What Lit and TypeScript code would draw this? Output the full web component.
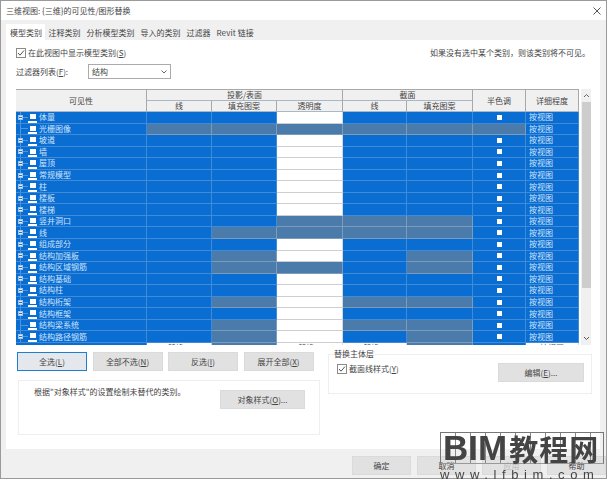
import { LitElement, html, css } from "lit";
import { customElement } from "lit/decorators.js";

const ROWS: [string, string, boolean][] = [
  ["体量", "bbwbbb", true],
  ["光栅图像", "gggggg", false],
  ["坡道", "bbwbbb", true],
  ["墙", "bbwbbb", true],
  ["屋顶", "bbwbbb", true],
  ["常规模型", "bbwbbb", true],
  ["柱", "bbwbbb", true],
  ["楼板", "bbwbbb", true],
  ["楼梯", "bbwbbb", true],
  ["竖井洞口", "bbgggb", true],
  ["线", "bggggb", true],
  ["组成部分", "bbwbbb", true],
  ["结构加强板", "bgwbgb", true],
  ["结构区域钢筋", "bggbgb", true],
  ["结构基础", "bbwbbb", true],
  ["结构柱", "bbwbbb", true],
  ["结构桁架", "bgwggb", true],
  ["结构框架", "bbwbbb", true],
  ["结构梁系统", "bgwggb", false],
  ["结构路径钢筋", "bgwbgb", true],
];

const TABS = ["模型类别", "注释类别", "分析模型类别", "导入的类别", "过滤器", "Revit 链接"];

@customElement("app-root")
export class AppRoot extends LitElement {
  static styles = css`
    :host {
      display: block;
      width: 608px;
      height: 480px;
      overflow: hidden;
      background: #fff;
      font-family: "Noto Sans CJK SC", "Liberation Sans", sans-serif;
      font-size: 8px;
      color: #333;
    }
    * { box-sizing: border-box; }
    .win {
      position: relative;
      width: 607px;
      height: 479px;
      border: 1px solid #9a9a9a;
      background: #f0f0f0;
      display: flex;
      flex-direction: column;
      filter: blur(0.5px);
    }
    .title {
      height: 19px;
      background: #fff;
      display: flex;
      align-items: center;
      justify-content: space-between;
      padding: 0 5px 0 5px;
      font-size: 8px;
      color: #444;
    }
    .tabs {
      height: 20px;
      display: flex;
      align-items: flex-end;
      padding-left: 5px;
      font-size: 8px;
      color: #444;
    }
    .tab { height: 16px; display: flex; align-items: center; padding: 0 3px; }
    .tab.on { background: #fff; padding: 0 3px 0 4px; margin-right: 0.5px; }
    .tab.rv { letter-spacing: 0.1px; }
    .panel {
      flex: none;
      height: 409px;
      width: 594px;
      margin-left: 5px;
      background: #fff;
      padding: 6px 10px 0 10px;
    }
    .top { display: flex; justify-content: space-between; align-items: center; height: 13px; }
    .chk { display: inline-flex; align-items: center; gap: 2px; color: #444; }
    .box {
      width: 10px; height: 10px; border: 1px solid #8a8a8a; background: #fff;
      display: inline-flex; align-items: center; justify-content: center;
    }
    .note { color: #444; white-space: nowrap; }
    .filter { display: flex; align-items: center; height: 15px; margin-top: 5px; color: #444; }
    .filter .lab { width: 72px; }
    .select {
      width: 83px; height: 15px; border: 1px solid #ababab; background: #fff;
      display: flex; align-items: center; justify-content: space-between; padding: 0 3px;
    }
    .tablewrap { display: flex; gap: 2px; margin-top: 10px; width: 575px; height: 256px; }
    .grid {
      width: 563px;
      height: 256px;
      overflow: hidden;
      display: grid;
      grid-template-columns: 131px 65px 65px 66px 64px 66px 53px 53px;
      grid-template-rows: 11px 11px;
      grid-auto-rows: 11.55px;
      border-top: 1px solid #a9a9a9;
      background: #f0f0f0;
    }
    .h {
      background: #f0f0f0;
      display: flex; align-items: center; justify-content: center;
      color: #444;
      border-right: 1px solid #a8a8a8;
      border-bottom: 1px solid #a8b8c8;
      line-height: 1;
    }
    .h.a { grid-row: span 2; }
    .h.sp2 { grid-column: span 2; }
    .h.sp3 { grid-column: span 3; }
    .c {
      border-right: 1px solid #3f8bd8;
      border-bottom: 1px solid #3f8bd8;
      overflow: hidden;
      display: flex;
      align-items: center;
      line-height: 1;
      color: #cfe4fa;
    }
    .b { background: #0a6dd2; }
    .g { background: #4a7baa; border-right-color: #7c9cbc; border-bottom-color: #7c9cbc; }
    .w { background: #fff; border-right-color: #d8d8d8; border-bottom-color: #cfcfcf; color: #555; justify-content: center; }
    .name { padding-left: 2px; gap: 0; }
    .twig {
      width: 10px; height: 100%;
      display: flex; align-items: center;
      background:
        linear-gradient(#4e95dc, #4e95dc) 2px 0 / 1px 100% no-repeat,
        linear-gradient(#4e95dc, #4e95dc) 2px 50% / 8px 1px no-repeat;
      flex: none;
    }
    .exp {
      width: 5px; height: 5px; background: #dfeafa; border: 1px solid #9cc3ea;
      display: flex; align-items: center; justify-content: center;
    }
    .exp::after { content: ""; width: 3px; height: 1px; background: #2a70b8; }
    .mark { width: 9px; height: 100%; display: flex; flex-direction: column; align-items: center; flex: none; padding-top: 2px; }
    .mark i { display: block; width: 6px; height: 5px; background: #fff; }
    .mark b { display: block; width: 9px; height: 2px; background: #fff; margin-top: auto; }
    .lbl { margin-left: 2px; white-space: nowrap; }
    .half { justify-content: center; }
    .half i { display: block; width: 5px; height: 5px; background: #fff; }
    .det { padding-left: 3px; }
    .top3 { align-items: flex-start; padding-top: 1px; }
    .bar {
      width: 10px; height: 256px; background: #f0f0f0;
      display: grid; grid-template-rows: 13px 186px 1fr 13px; justify-items: center; align-items: center;
    }
    .thumb { width: 9px; height: 100%; background: #cdcdcd; }
    .lower {
      display: grid;
      grid-template-columns: 304px 264px;
      column-gap: 8px;
      margin-top: 7px;
    }
    .btns { display: flex; gap: 5.5px; margin-left: 1px; }
    .btn {
      height: 19px; background: #e1e1e1; border: 1px solid #dadada;
      display: flex; align-items: center; justify-content: center; color: #444;
    }
    .btns .btn { width: 70px; }
    .btn.on { border: 1px solid #1c7fd0; background: #e4e8ec; }
    .grp1 {
      margin: 9px 0 0 2px;
      width: 302px; height: 55px;
      border: 1px solid #eee;
      display: flex; justify-content: space-between;
      padding: 5px 14px 0 15px;
      color: #444;
    }
    .grp1 .btn { width: 85px; margin-top: 4px; }
    .grp2 {
      margin-top: 2px;
      height: 40px;
      border: 1px solid #eee;
      display: flex; justify-content: space-between; align-items: flex-start;
      padding: 8px 7px 0 8px;
      position: relative;
      color: #444;
    }
    .legend { position: absolute; left: 4px; top: -6px; background: #fff; padding: 0 1px; line-height: 10px; }
    .grp2 .btn { width: 86px; }
    .foot {
      flex: 1;
      display: flex;
      gap: 6px;
      padding: 7px 0 0 351px;
    }
    .foot .btn { width: 59px; height: 19px; }
    .foot .dis { color: #b5b5b5; }
    .u { text-decoration: underline; text-underline-offset: 1px; }
    .wm {
      position: absolute;
      left: 439px;
      top: 431px;
      width: 164px;
      height: 48px;
      color: #444;
      pointer-events: none;
    }
    .wmgrid {
      height: 32px;
      border: 1px solid #777;
      border-bottom-color: #999;
      background: repeating-linear-gradient(90deg, transparent 0 14px, #888 14px 15px);
      display: flex;
      align-items: center;
      white-space: nowrap;
      overflow: visible;
      padding-left: 2px;
    }
    .wm1 { font: bold 35px/32px "Liberation Sans", sans-serif; }
    .wm2 { font: 700 29px/32px "Noto Sans CJK SC", sans-serif; letter-spacing: 1px; margin-left: 2px; }
    .wmurl {
      font: 13px/14px "Liberation Sans", sans-serif;
      letter-spacing: 5.6px;
      white-space: nowrap;
      margin-top: 4px;
    }
  `;

  private cell(k: string) {
    return html`<div class="c ${k}"></div>`;
  }

  private check(size = 8) {
    return html`<svg width="${size}" height="${size}" viewBox="0 0 8 8"><path d="M1 4l2 2.2L7 1.5" fill="none" stroke="#555" stroke-width="1"/></svg>`;
  }

  render() {
    return html`
      <div class="win">
        <div class="title">
          <span>三维视图: {三维}的可见性/图形替换</span>
          <svg width="8" height="8" viewBox="0 0 8 8"><path d="M.5.5l7 7M7.5.5l-7 7" stroke="#555" stroke-width="1" fill="none"/></svg>
        </div>
        <div class="tabs">
          ${TABS.map((t, i) => html`<div class="tab ${i === 0 ? "on" : ""} ${i === 5 ? "rv" : ""}">${t}</div>`)}
        </div>
        <div class="panel">
          <div class="top">
            <span class="chk"><span class="box">${this.check()}</span><span>在此视图中显示模型类别(<span class="u">S</span>)</span></span>
            <span class="note">如果没有选中某个类别，则该类别将不可见。</span>
          </div>
          <div class="filter">
            <span class="lab">过滤器列表(<span class="u">F</span>):</span>
            <div class="select">
              <span>结构</span>
              <svg width="6" height="4" viewBox="0 0 6 4"><path d="M.5.5L3 3 5.5.5" fill="none" stroke="#666"/></svg>
            </div>
          </div>
          <div class="tablewrap">
            <div class="grid">
              <div class="h a">可见性</div>
              <div class="h sp3">投影/表面</div>
              <div class="h sp2">截面</div>
              <div class="h a">半色调</div>
              <div class="h a">详细程度</div>
              <div class="h">线</div>
              <div class="h">填充图案</div>
              <div class="h">透明度</div>
              <div class="h">线</div>
              <div class="h">填充图案</div>
              ${ROWS.map(([name, k, exp]) => html`
                <div class="c b name">
                  <span class="twig">${exp ? html`<span class="exp"></span>` : ""}</span>
                  <span class="mark"><i></i><b></b></span>
                  <span class="lbl">${name}</span>
                </div>
                ${[0, 1, 2, 3, 4].map((i) => this.cell(k[i]))}
                <div class="c half ${k[5]}">${k[5] === "b" ? html`<i></i>` : ""}</div>
                <div class="c b det">按视图</div>
              `)}
              <div class="c b"></div>
              <div class="c w top3">替换...</div>
              <div class="c g"></div>
              <div class="c w top3">替换...</div>
              <div class="c w top3">替换...</div>
              <div class="c g"></div>
              <div class="c b"></div>
              <div class="c w top3">按视图</div>
            </div>
            <div class="bar">
              <svg width="7" height="5" viewBox="0 0 7 5"><path d="M1 4l2.5-2.5L6 4" fill="none" stroke="#666"/></svg>
              <div class="thumb"></div>
              <div></div>
              <svg width="7" height="5" viewBox="0 0 7 5"><path d="M1 1l2.5 2.5L6 1" fill="none" stroke="#555"/></svg>
            </div>
          </div>
          <div class="lower">
            <div>
              <div class="btns">
                <div class="btn on">全选(<span class="u">L</span>)</div>
                <div class="btn">全部不选(<span class="u">N</span>)</div>
                <div class="btn">反选(<span class="u">I</span>)</div>
                <div class="btn">展开全部(<span class="u">X</span>)</div>
              </div>
              <div class="grp1">
                <span>根据"对象样式"的设置绘制未替代的类别。</span>
                <div class="btn">对象样式(<span class="u">O</span>)...</div>
              </div>
            </div>
            <div class="grp2">
              <span class="legend">替换主体层</span>
              <span class="chk"><span class="box">${this.check()}</span><span>截面线样式(<span class="u">Y</span>)</span></span>
              <div class="btn">编辑(<span class="u">E</span>)...</div>
            </div>
          </div>
        </div>
        <div class="foot">
          <div class="btn">确定</div>
          <div class="btn">取消</div>
          <div class="btn dis">应用</div>
          <div class="btn">帮助</div>
        </div>
        <div class="wm">
          <div class="wmgrid"><span class="wm1">BIM</span><span class="wm2">教程网</span></div>
          <div class="wmurl">www.lfbim.com</div>
        </div>
      </div>
    `;
  }
}
